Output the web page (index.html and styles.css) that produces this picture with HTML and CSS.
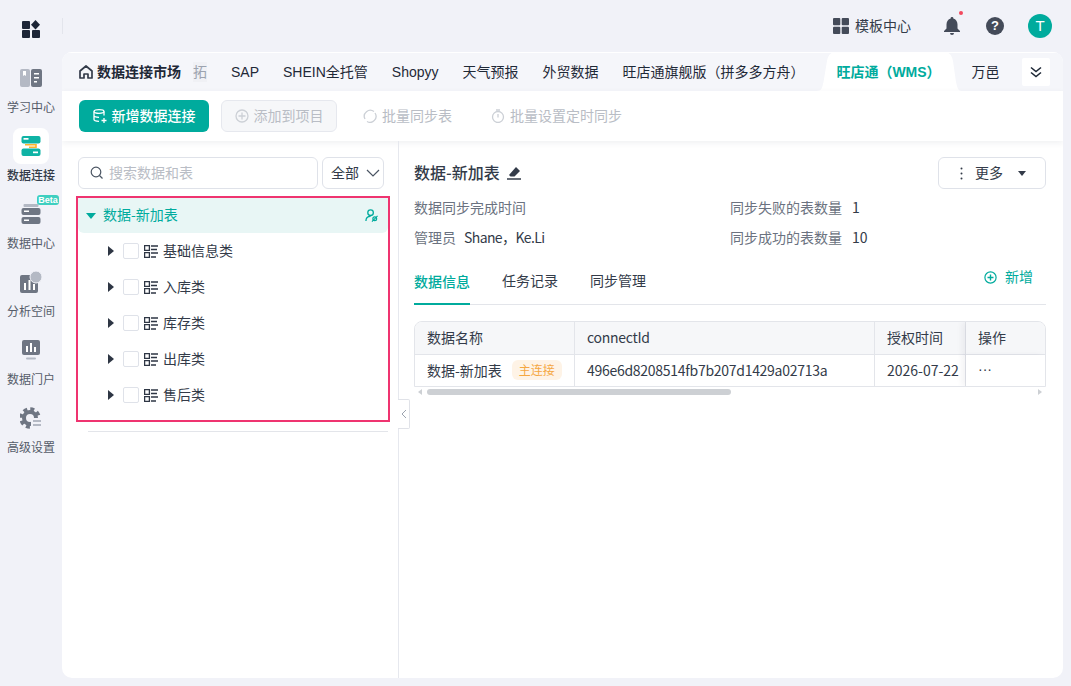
FILE: index.html
```html
<!DOCTYPE html>
<html lang="zh-CN">
  <head>
    <meta charset="utf-8" />
    <title>数据连接</title>
    <link rel="stylesheet" href="styles.css">
  </head>
  <body>
    <div class="app">
      <aside class="side">
        <div class="logo-row">
          <svg class="logo" viewBox="0 0 18 18" width="18" height="18"><rect x="0" y="1" width="8" height="8" rx="1" fill="#1c2536"/><path d="M13.5 0l4.500 4.700-4.500 4.700L9 4.700z" fill="#1c2536"/><rect x="0" y="10" width="8" height="8" rx="1" fill="#1c2536"/><rect x="10" y="10" width="8" height="8" rx="1" fill="#1c2536"/></svg>
        </div>
        <nav class="nav">
          <a class="nav-item">
            <span class="nav-icon">
              <svg viewBox="0 0 22 18" width="22" height="18"><rect x="0" y="0" width="10" height="18" rx="2" fill="#b4b9c4"/><rect x="11" y="0" width="11" height="18" rx="2" fill="#6f7683"/><path d="M3 2h3v5L4.500 6 3 7z" fill="#fff"/><path d="M14 4h5v1.500h-5zM14 8h5v1.500h-5zM14 12h3v1.500h-3z" fill="#fff"/></svg>
            </span>
            <span>学习中心</span>
          </a>
          <a class="nav-item is-active">
            <span class="nav-icon">
              <svg viewBox="0 0 20 20" width="20" height="20"><path d="M4 8.700h11v2.600H8" fill="none" stroke="#fbb42c" stroke-width="1.600"/><rect x="0.500" y="0" width="19" height="7.500" rx="2" fill="#0fb3a5"/><rect x="0.500" y="12.500" width="19" height="7.500" rx="2" fill="#0fb3a5"/><rect x="2.500" y="2" width="5" height="1.700" fill="#fff"/><rect x="12" y="15.500" width="5" height="1.700" fill="#fff"/></svg>
            </span>
            <span>数据连接</span>
          </a>
          <a class="nav-item">
            <span class="beta">Beta</span>
            <span class="nav-icon">
              <svg viewBox="0 0 20 20" width="20" height="20"><rect x="2.500" y="0" width="15" height="3" rx="1" fill="#b4b9c4"/><rect x="0.500" y="4" width="19" height="7" rx="2" fill="#6f7683"/><rect x="0.500" y="13" width="19" height="7" rx="2" fill="#6f7683"/><rect x="3" y="6.500" width="5" height="1.500" fill="#fff"/><rect x="3" y="15.500" width="5" height="1.500" fill="#fff"/></svg>
            </span>
            <span>数据中心</span>
          </a>
          <a class="nav-item">
            <span class="nav-icon">
              <svg viewBox="0 0 22 22" width="22" height="22"><rect x="0" y="4" width="18" height="18" rx="2" fill="#6f7683"/><circle cx="16" cy="6" r="6" fill="#b4b9c4" stroke="#f1f2f8" stroke-width="1"/><path d="M4 12h2v7H4zM8.500 9h2v10h-2zM13 13h2v6h-2z" fill="#fff"/></svg>
            </span>
            <span>分析空间</span>
          </a>
          <a class="nav-item">
            <span class="nav-icon">
              <svg viewBox="0 0 20 20" width="20" height="20"><rect x="1" y="0" width="18" height="15" rx="2" fill="#6f7683"/><rect x="5" y="17.500" width="10" height="2" rx="1" fill="#b4b9c4"/><path d="M5 6h2v6H5zM9 3h2v9H9zM13 7h2v5h-2z" fill="#fff"/></svg>
            </span>
            <span>数据门户</span>
          </a>
          <a class="nav-item">
            <span class="nav-icon">
              <svg viewBox="0 0 22 22" width="22" height="22"><circle cx="10" cy="11" r="6" fill="none" stroke="#6f7683" stroke-width="4"/><circle cx="10" cy="11" r="9" fill="none" stroke="#6f7683" stroke-width="3.500" stroke-dasharray="4 3.070"/><rect x="11" y="11" width="11" height="11" fill="#f1f2f8"/><path d="M13 14h8M13 18h8" stroke="#b4b9c4" stroke-width="1.800"/></svg>
            </span>
            <span>高级设置</span>
          </a>
        </nav>
      </aside>

      <div class="body">
        <header class="top">
          <span class="divider"></span>
          <a class="tpl">
            <svg viewBox="0 0 16 16" width="16" height="16"><rect x="0" y="0" width="7.300" height="7.300" rx="1" fill="#444b59"/><rect x="8.700" y="0" width="7.300" height="7.300" rx="1" fill="#444b59"/><rect x="0" y="8.700" width="7.300" height="7.300" rx="1" fill="#444b59"/><rect x="8.700" y="8.700" width="7.300" height="7.300" rx="1" fill="#444b59"/></svg>
            <span class="t">模板中心</span>
          </a>
          <span class="bell">
            <svg viewBox="0 0 16 18" width="16" height="18"><path d="M8 0a1.300 1.300 0 0 1 1.300 1.500C12 2.200 13.500 4.500 13.500 7.500v4L16 14v1H0v-1l2.500-2.500v-4C2.500 4.500 4 2.200 6.700 1.500A1.300 1.300 0 0 1 8 0zM6 16h4a2 2 0 0 1-4 0z" fill="#444b59"/></svg>
            <i class="dot"></i>
          </span>
          <span class="help">?</span>
          <span class="avatar">T</span>
        </header>

        <main class="panel">
          <div class="tabs">
            <a class="tab-home">
              <svg viewBox="0 0 14 14" width="14" height="14"><path d="M1 6l6-5 6 5v7H9V9H5v4H1z" fill="none" stroke="#333b49" stroke-width="1.700" stroke-linejoin="round"/></svg>
              数据连接市场
            </a>
            <a class="tab tab-cut">拓</a>
            <a class="tab">SAP</a>
            <a class="tab">SHEIN全托管</a>
            <a class="tab">Shopyy</a>
            <a class="tab">天气预报</a>
            <a class="tab">外贸数据</a>
            <a class="tab">旺店通旗舰版（拼多多方舟）</a>
            <a class="tab is-active">
              <svg class="tab-shape" viewBox="0 0 146 39" width="146" height="39" preserveAspectRatio="none"><path d="M0 39c6 0 6-3 7.500-9L11 9C12.500 2 15 0 21 0h106c6 0 8.500 2 10 9l3 21c1.500 6 2 9 6 9z" fill="#fff"/></svg>
              <b>旺店通（WMS）</b>
            </a>
            <a class="tab">万邑</a>
            <button class="tab-more">
              <svg viewBox="0 0 14 12" width="14" height="12"><path d="M2 1.500l5 4 5-4M2 6.500l5 4 5-4" fill="none" stroke="#1f2937" stroke-width="1.600"/></svg>
            </button>
          </div>

          <div class="toolbar">
            <button class="btn-main">
              <svg viewBox="0 0 14 14" width="14" height="14"><g fill="none" stroke="#fff" stroke-width="1.300"><ellipse cx="6" cy="2.500" rx="5" ry="1.800"/><path d="M1 2.500v8c0 1 2 1.800 5 1.800M11 2.500v4M1 6.500c0 1 2 1.800 5 1.800"/><path d="M11 9v5M8.500 11.500h5"/></g></svg>
              <span class="t">新增数据连接</span>
            </button>
            <button class="btn-off">
              <svg viewBox="0 0 14 14" width="14" height="14"><circle cx="7" cy="7" r="6" fill="none" stroke="#ccd0d6" stroke-width="1.300"/><path d="M7 3.500v7M3.500 7h7" stroke="#ccd0d6" stroke-width="1.300"/></svg>
              <span class="t">添加到项目</span>
            </button>
            <span class="act-off">
              <svg viewBox="0 0 14 14" width="14" height="14"><path d="M2 10A6 6 0 0 1 11 2.500M12 4a6 6 0 0 1-8 8.500" fill="none" stroke="#ccd0d6" stroke-width="1.300"/></svg>
              <span class="t">批量同步表</span>
            </span>
            <span class="act-off">
              <svg viewBox="0 0 14 14" width="14" height="14"><circle cx="7" cy="8" r="5.500" fill="none" stroke="#ccd0d6" stroke-width="1.300"/><path d="M5 1h4M7 5v3.500" stroke="#ccd0d6" stroke-width="1.300"/></svg>
              <span class="t">批量设置定时同步</span>
            </span>
          </div>

          <div class="split">
            <section class="left">
              <div class="filter">
                <label class="search">
                  <svg viewBox="0 0 14 14" width="14" height="14"><circle cx="6" cy="6" r="4.800" fill="none" stroke="#4b5563" stroke-width="1.200"/><path d="M9.500 9.500l3 3" stroke="#4b5563" stroke-width="1.200"/></svg>
                  <span class="t">搜索数据和表</span>
                </label>
                <div class="select">
                  <span class="t">全部</span>
                  <svg viewBox="0 0 14 8" width="14" height="8"><path d="M1 1l6 6 6-6" fill="none" stroke="#4b5563" stroke-width="1.200"/></svg>
                </div>
              </div>

              <div class="tree-mark">
                <div class="root">
                  <i class="tri-down"></i>
                  <span class="root-name">数据-新加表</span>
                  <svg viewBox="0 0 14 14" width="13" height="13"><circle cx="6" cy="4" r="3" fill="none" stroke="#00ab9d" stroke-width="1.400"/><path d="M1 13c0-3 2-5 5-5" fill="none" stroke="#00ab9d" stroke-width="1.400"/><circle cx="10.500" cy="10.500" r="2" fill="none" stroke="#00ab9d" stroke-width="1.400"/><path d="M13.500 7.500l-6 6" stroke="#00ab9d" stroke-width="1.200"/></svg>
                </div>
                <div class="node"><i class="tri-right"></i><i class="check"></i><svg viewBox="0 0 14 13" width="14" height="13"><use href="#cat"/></svg><span class="t">基础信息类</span></div>
                <div class="node"><i class="tri-right"></i><i class="check"></i><svg viewBox="0 0 14 13" width="14" height="13"><use href="#cat"/></svg><span class="t">入库类</span></div>
                <div class="node"><i class="tri-right"></i><i class="check"></i><svg viewBox="0 0 14 13" width="14" height="13"><use href="#cat"/></svg><span class="t">库存类</span></div>
                <div class="node"><i class="tri-right"></i><i class="check"></i><svg viewBox="0 0 14 13" width="14" height="13"><use href="#cat"/></svg><span class="t">出库类</span></div>
                <div class="node"><i class="tri-right"></i><i class="check"></i><svg viewBox="0 0 14 13" width="14" height="13"><use href="#cat"/></svg><span class="t">售后类</span></div>
              </div>
              <div class="tree-line"></div>
              <span class="collapse">
                <svg viewBox="0 0 6 10" width="6" height="10"><path d="M5 1L1 5l4 4" fill="none" stroke="#9ca3af" stroke-width="1"/></svg>
              </span>
            </section>

            <section class="right">
              <div class="head">
                <h1 class="t">数据-新加表</h1>
                <svg viewBox="0 0 14 14" width="14" height="14"><path d="M9 1l4 4-5.500 5.500H3.500L2 9z" fill="#333b49"/><path d="M0 13h14" stroke="#333b49" stroke-width="1.400"/></svg>
                <button class="more">
                  <svg viewBox="0 0 3 13" width="3" height="13"><circle cx="1.500" cy="1.500" r="1" fill="#333b49"/><circle cx="1.500" cy="6.500" r="1" fill="#333b49"/><circle cx="1.500" cy="11.500" r="1" fill="#333b49"/></svg>
                  <span class="t">更多</span>
                  <i class="tri-small"></i>
                </button>
              </div>

              <div class="info">
                <div class="info-cell"><span class="k">数据同步完成时间</span></div>
                <div class="info-cell"><span class="k">同步失败的表数量</span><span>1</span></div>
                <div class="info-cell info-short"><span class="k">管理员</span><span class="names">Shane，Ke.Li</span></div>
                <div class="info-cell"><span class="k">同步成功的表数量</span><span>10</span></div>
              </div>

              <div class="subtabs">
                <a class="subtab is-active">数据信息</a>
                <a class="subtab">任务记录</a>
                <a class="subtab">同步管理</a>
                <a class="add">
                  <svg viewBox="0 0 13 13" width="13" height="13"><circle cx="6.500" cy="6.500" r="5.600" fill="none" stroke="#00ab9d" stroke-width="1.200"/><path d="M6.500 3.500v6M3.500 6.500h6" stroke="#00ab9d" stroke-width="1.400"/></svg>
                  <span class="t">新增</span>
                </a>
              </div>

              <div class="table">
                <div class="cols">
                  <div class="c c1 th">数据名称</div>
                  <div class="c c2 th hex">connectId</div>
                  <div class="c c3 th">授权时间</div>
                  <div class="c c4 th">操作</div>
                  <div class="c c1 td">数据-新加表<span class="tag">主连接</span></div>
                  <div class="c c2 td hex">496e6d8208514fb7b207d1429a02713a</div>
                  <div class="c c3 td">2026-07-22</div>
                  <div class="c c4 td dots">···</div>
                </div>
              </div>
              <div class="scroll">
                <i class="arr-l"></i>
                <span class="thumb"></span>
                <i class="arr-r"></i>
              </div>
            </section>
          </div>
        </main>
      </div>
    </div>

    <svg class="defs" width="0" height="0">
      <symbol id="cat" viewBox="0 0 14 13">
        <path d="M.6.6h4.800v4.800H.6zM.6 7.600h4.800v4.800H.6z" fill="none" stroke="#2e3644" stroke-width="1.300"/>
        <path d="M7 1h7M7 4.500h6M7 8h7M7 12h5" stroke="#2e3644" stroke-width="1.400"/>
      </symbol>
    </svg>
  </body>
</html>
```

FILE: styles.css
```css
* {
  box-sizing: border-box;
}
html,
body {
  margin: 0;
  height: 100%;
}
body {
  background: #f1f2f8;
  color: #333b49;
  font: 14px/20px "Noto Sans CJK SC", sans-serif;
  overflow: hidden;
}
button {
  font: inherit;
  color: inherit;
  cursor: pointer;
}
i {
  display: block;
}
.defs {
  position: absolute;
}
/* lifts label text a pixel inside a centered flex row */
.t {
  margin-bottom: 2px;
}
.app {
  display: flex;
  height: 686px;
}

/* left rail */
.side {
  width: 62px;
  flex: none;
}
.logo-row {
  height: 52px;
  display: flex;
  justify-content: center;
  align-items: center;
  padding-top: 6px;
}
.nav {
  display: flex;
  flex-direction: column;
  padding-top: 8px;
}
.nav-item {
  position: relative;
  height: 68px;
  display: flex;
  flex-direction: column;
  align-items: center;
  font-size: 12px;
  line-height: 16px;
  color: #555c69;
}
.nav-icon {
  width: 36px;
  height: 36px;
  margin-bottom: 3px;
  border-radius: 8px;
  display: flex;
  align-items: center;
  justify-content: center;
}
.nav-item.is-active {
  color: #333b49;
  font-weight: 500;
}
.nav-item.is-active .nav-icon {
  background: #fff;
}
.beta {
  position: absolute;
  top: -1px;
  right: 3px;
  width: 22px;
  height: 10px;
  border-radius: 3px;
  background: #3fcfc0;
  color: #fff;
  text-align: center;
  font: 700 9px/10px "Liberation Sans", sans-serif;
}

/* top bar */
.body {
  flex: 1;
  display: flex;
  flex-direction: column;
  min-width: 0;
  padding-right: 8px;
  padding-bottom: 8px;
}
.top {
  height: 52px;
  flex: none;
  display: flex;
  align-items: center;
  position: relative;
  justify-content: flex-end;
}
.divider {
  position: absolute;
  left: 0;
  top: 18px;
  width: 1px;
  height: 16px;
  background: #e3e5ec;
}
.tpl {
  display: flex;
  align-items: center;
  gap: 6px;
  color: #333b49;
  margin-right: 33px;
}
.bell {
  position: relative;
  display: flex;
  margin-right: 26px;
}
.dot {
  position: absolute;
  top: -6px;
  right: -3px;
  width: 4px;
  height: 4px;
  border-radius: 50%;
  background: #f2495e;
}
.help {
  width: 18px;
  height: 18px;
  border-radius: 50%;
  background: #444b59;
  color: #fff;
  font: bold 13px/18px "Liberation Sans", sans-serif;
  text-align: center;
  margin-right: 24px;
}
.avatar {
  width: 24px;
  height: 24px;
  border-radius: 50%;
  background: #00ab9d;
  color: #fff;
  font: 15px/24px "Liberation Sans", sans-serif;
  text-align: center;
  margin-right: 11px;
}

/* main panel */
.panel {
  flex: 1;
  min-height: 0;
  background: #fff;
  border-radius: 10px;
  display: flex;
  flex-direction: column;
  overflow: hidden;
}
.tabs {
  height: 39px;
  flex: none;
  display: flex;
  align-items: center;
  background: #f5f6fa;
  box-shadow: inset 0 1px #fff;
  padding-left: 17px;
  font-family: "Liberation Sans", "Noto Sans CJK SC", sans-serif;
  color: #1f2937;
}
.tab-home {
  display: flex;
  align-items: center;
  gap: 4px;
  font-weight: 700;
  width: 114px;
}
.tab {
  position: relative;
  margin-right: 24px;
  white-space: nowrap;
}
.tab-cut {
  width: 14px;
  color: #9ca3af;
  background: #f0f1f5;
}
.tab.is-active {
  height: 39px;
  width: 146px;
  margin: 0 10px 0 -13px;
  display: flex;
  align-items: center;
  justify-content: center;
  color: #00ab9d;
}
.tab.is-active b {
  position: relative;
}
.tab-shape {
  position: absolute;
  left: 0;
  top: 0;
}
.tab-more {
  width: 28px;
  height: 28px;
  padding: 0;
  margin-left: -2px;
  border: 0;
  border-radius: 2px;
  background: #fff;
  display: flex;
  align-items: center;
  justify-content: center;
}
.toolbar {
  height: 50px;
  flex: none;
  display: flex;
  align-items: center;
  padding-left: 17px;
  box-shadow: 0 2px 6px rgba(30, 40, 70, 0.07);
  position: relative;
}
.btn-main,
.btn-off {
  height: 32px;
  border-radius: 6px;
  display: flex;
  align-items: center;
  justify-content: center;
  gap: 5px;
}
.btn-main {
  width: 130px;
  border: 0;
  padding: 0;
  background: #00ab9d;
  color: #fff;
  font-weight: 500;
  margin-right: 12px;
}
.btn-off {
  width: 116px;
  border: 1px solid #e6e8ee;
  background: #f6f7f9;
  color: #b9bdc5;
  padding: 0;
  margin-right: 26px;
}
.act-off {
  display: flex;
  align-items: center;
  gap: 5px;
  color: #b9bdc5;
  margin-right: 39px;
}

.split {
  flex: 1;
  min-height: 0;
  display: flex;
}

/* tree */
.left {
  position: relative;
  width: 337px;
  flex: none;
  border-right: 1px solid #e6e8ee;
  padding: 16px 0 0 14px;
}
.filter {
  display: flex;
  gap: 4px;
  margin: 0 0 7px 2px;
}
.search,
.select {
  height: 32px;
  border: 1px solid #dfe2e9;
  border-radius: 6px;
  display: flex;
  align-items: center;
}
.search {
  width: 240px;
  padding-left: 11px;
  gap: 5px;
  color: #b9bdc5;
}
.select {
  width: 62px;
  padding-left: 8px;
  gap: 7px;
}
.tree-mark {
  width: 314px;
  height: 226px;
  border: 2px solid #ef3470;
}
.root {
  height: 35px;
  width: 310px;
  background: #e8f6f5;
  border-radius: 0 0 6px 6px;
  display: flex;
  align-items: center;
  padding: 0 10px 0 8px;
  color: #00ab9d;
}
.root-name {
  flex: 1;
  margin: 0 0 4px 7px;
}
.tri-down {
  width: 0;
  height: 0;
  border: 5px solid transparent;
  border-top: 6px solid #00ab9d;
  border-bottom: 0;
}
.node {
  height: 36px;
  display: flex;
  align-items: center;
  padding-left: 30px;
}
.tri-right {
  width: 0;
  height: 0;
  border: 5px solid transparent;
  border-left: 6px solid #2e3644;
  border-right: 0;
  margin-right: 9px;
}
.check {
  width: 16px;
  height: 16px;
  border: 1px solid #dfe2e9;
  border-radius: 2px;
  margin-right: 5px;
}
.node svg {
  margin-right: 5px;
}
.tree-line {
  height: 1px;
  width: 300px;
  margin: 9px 0 0 12px;
  background: #e3e5ea;
}
.collapse {
  position: absolute;
  left: 336px;
  top: 258px;
  width: 12px;
  height: 30px;
  background: #fff;
  border: 1px solid #e0e2e8;
  border-left: 0;
  border-radius: 0 2px 2px 0;
  display: flex;
  align-items: center;
  justify-content: center;
}

/* detail pane */
.right {
  flex: 1;
  min-width: 0;
  padding: 16px 17px 0 15px;
}
.head {
  display: flex;
  align-items: center;
  height: 32px;
  gap: 7px;
}
.head h1 {
  font-size: 16px;
  font-weight: 500;
  margin: 0 0 2px;
}
.more {
  margin-left: auto;
  width: 108px;
  height: 32px;
  background: #fff;
  border: 1px solid #dfe2e9;
  border-radius: 6px;
  display: flex;
  align-items: center;
  padding: 0 0 0 21px;
}
.more span {
  margin-left: 12px;
}
.tri-small {
  width: 0;
  height: 0;
  border: 4px solid transparent;
  border-top: 5px solid #333b49;
  border-bottom: 0;
  margin-left: 15px;
}
.info {
  display: grid;
  grid-template-columns: 316px 1fr;
  grid-auto-rows: 30px;
  margin-top: 3px;
}
.info-cell {
  display: flex;
  align-items: center;
  gap: 10px;
}
.info-short {
  gap: 8px;
}
.names {
  letter-spacing: -0.6px;
}
.k {
  color: #6b7280;
}
.subtabs {
  display: flex;
  align-items: flex-end;
  height: 48px;
  margin-top: 5px;
  border-bottom: 1px solid #e3e5ea;
  gap: 32px;
}
.subtab {
  height: 40px;
  padding-top: 6px;
}
.subtab.is-active {
  color: #00ab9d;
  font-weight: 500;
  border-bottom: 2px solid #00ab9d;
  margin-bottom: -1px;
}
.add {
  margin-left: auto;
  margin-right: 13px;
  align-self: flex-start;
  margin-top: 9px;
  display: flex;
  align-items: center;
  gap: 8px;
  color: #00ab9d;
}
.table {
  margin-top: 16px;
  border: 1px solid #e3e5ea;
  border-radius: 8px 8px 0 0;
  overflow: hidden;
}
.cols {
  display: grid;
  grid-template-columns: 160px 300px 91px 1fr;
  grid-template-rows: 33px 31px;
}
.c {
  display: flex;
  align-items: center;
  padding: 0 0 2px 12px;
  overflow: hidden;
  white-space: nowrap;
  border-right: 1px solid #e3e5ea;
}
.hex {
  letter-spacing: -0.28px;
}
.c4 {
  border-right: 0;
  padding-left: 12px;
  box-shadow: -4px 0 6px rgba(30, 40, 70, 0.06);
  background: #fff;
  position: relative;
}
.dots {
  font-family: "Liberation Sans", sans-serif;
  padding-bottom: 4px;
}
.th,
.c4.th {
  background: #f6f7f9;
  border-bottom: 1px solid #e3e5ea;
}
.tag {
  margin-left: 10px;
  height: 20px;
  padding: 0 7px;
  border-radius: 6px;
  background: #fef3e6;
  color: #f5a742;
  font-size: 12px;
  line-height: 20px;
}
.scroll {
  height: 9px;
  display: flex;
  align-items: center;
  padding: 0 4px;
}
.thumb {
  width: 304px;
  height: 6px;
  margin-left: 5px;
  border-radius: 3px;
  background: #cdd0d4;
}
.arr-l,
.arr-r {
  width: 0;
  height: 0;
  border: 3px solid transparent;
}
.arr-l {
  border-right: 4px solid #cdd0d4;
  border-left: 0;
}
.arr-r {
  border-left: 4px solid #cdd0d4;
  border-right: 0;
  margin-left: auto;
}
```
